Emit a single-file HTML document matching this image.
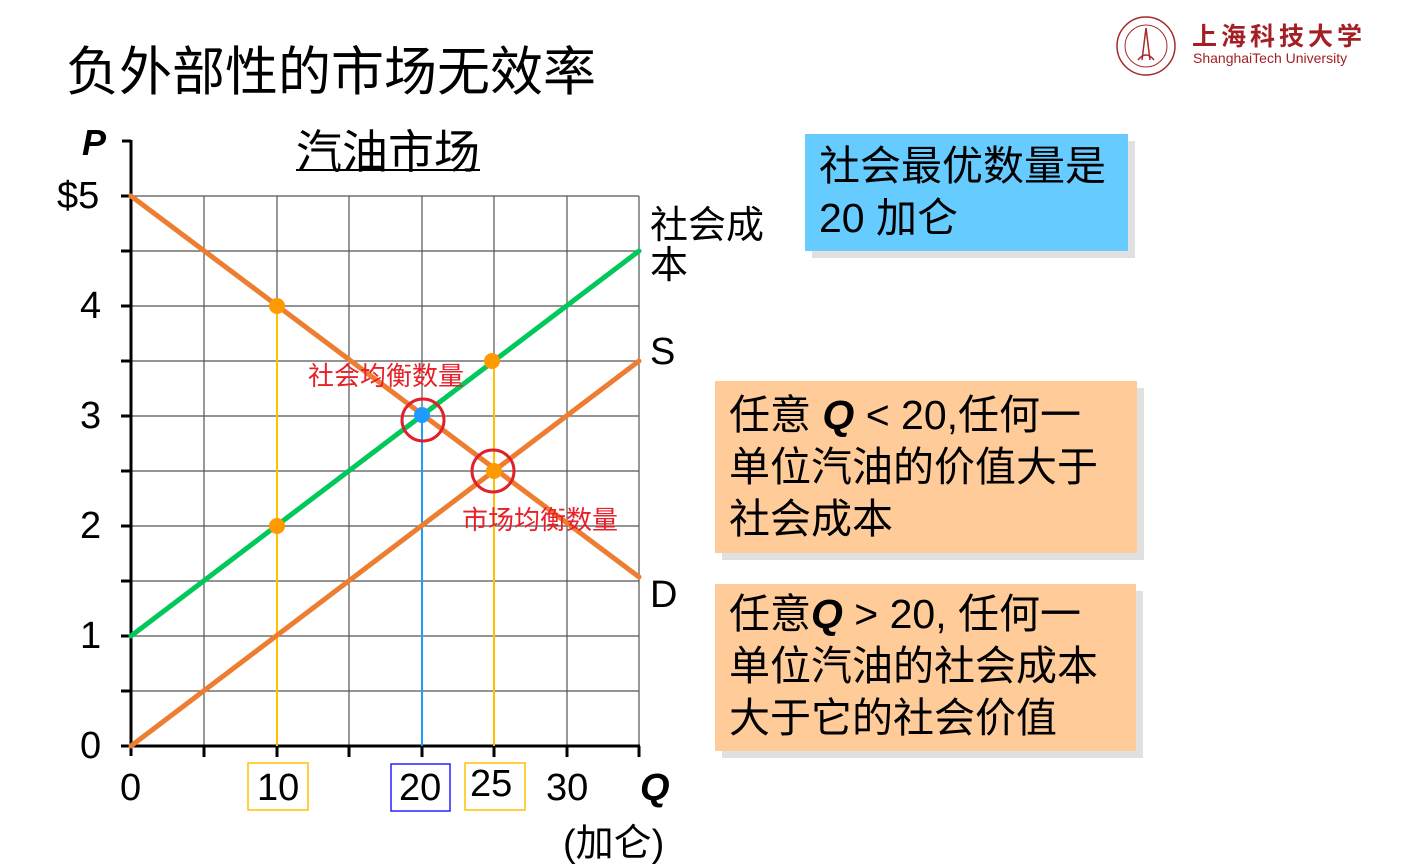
<!DOCTYPE html>
<html><head><meta charset="utf-8">
<style>
body{margin:0;width:1416px;height:868px;background:#fff;position:relative;overflow:hidden;font-family:"Liberation Sans","Noto Sans CJK SC",sans-serif;}
.a{position:absolute;white-space:nowrap;}
.box{position:absolute;box-shadow:7px 7px 0 #e0e0e0;font-size:41px;line-height:52px;color:#000;padding-left:14px;box-sizing:border-box;}
</style></head><body>
<div class="a" style="left:66px;top:41px;font-size:53px;line-height:64px;">负外部性的市场无效率</div>

<svg class="a" style="left:1112px;top:14px" width="70" height="64" viewBox="0 0 70 64">
<circle cx="34" cy="32" r="29" fill="none" stroke="#a52a2a" stroke-width="1.5"/>
<circle cx="34" cy="32" r="21" fill="none" stroke="#a52a2a" stroke-width="1"/>
<path d="M34 14 L30 46 M34 14 L38 46 M26 46 Q34 36 42 46" stroke="#a52a2a" stroke-width="1.5" fill="none"/>
</svg>
<div class="a" style="left:1192px;top:17px;font-size:25px;color:#a31f24;letter-spacing:4px;font-weight:bold;">上海科技大学</div>
<div class="a" style="left:1193px;top:50px;font-size:14px;color:#a31f24;">ShanghaiTech University</div>

<svg class="a" style="left:0;top:0" width="1416" height="868">
<g stroke="#555" stroke-width="1.2">
<line x1="204" y1="196" x2="204" y2="746"/><line x1="277" y1="196" x2="277" y2="746"/>
<line x1="349" y1="196" x2="349" y2="746"/><line x1="422" y1="196" x2="422" y2="746"/>
<line x1="494" y1="196" x2="494" y2="746"/><line x1="567" y1="196" x2="567" y2="746"/>
<line x1="639" y1="196" x2="639" y2="746"/>
<line x1="131" y1="196" x2="639" y2="196"/><line x1="131" y1="251" x2="639" y2="251"/>
<line x1="131" y1="306" x2="639" y2="306"/><line x1="131" y1="361" x2="639" y2="361"/>
<line x1="131" y1="416" x2="639" y2="416"/><line x1="131" y1="471" x2="639" y2="471"/>
<line x1="131" y1="526" x2="639" y2="526"/><line x1="131" y1="581" x2="639" y2="581"/>
<line x1="131" y1="636" x2="639" y2="636"/><line x1="131" y1="691" x2="639" y2="691"/>
</g>
<g stroke="#000" stroke-width="3">
<line x1="131" y1="140" x2="131" y2="756"/><line x1="121" y1="746" x2="640" y2="746"/>
<line x1="122" y1="141" x2="131" y2="141"/>
<line x1="121" y1="196" x2="131" y2="196"/><line x1="121" y1="251" x2="131" y2="251"/><line x1="121" y1="306" x2="131" y2="306"/><line x1="121" y1="361" x2="131" y2="361"/><line x1="121" y1="416" x2="131" y2="416"/><line x1="121" y1="471" x2="131" y2="471"/><line x1="121" y1="526" x2="131" y2="526"/><line x1="121" y1="581" x2="131" y2="581"/><line x1="121" y1="636" x2="131" y2="636"/><line x1="121" y1="691" x2="131" y2="691"/>
<line x1="204" y1="746" x2="204" y2="757"/><line x1="277" y1="746" x2="277" y2="757"/><line x1="349" y1="746" x2="349" y2="757"/><line x1="422" y1="746" x2="422" y2="757"/><line x1="494" y1="746" x2="494" y2="757"/><line x1="567" y1="746" x2="567" y2="757"/><line x1="639" y1="746" x2="639" y2="757"/>
</g>
<g stroke-width="2">
<line x1="277" y1="306" x2="277" y2="746" stroke="#ffc000"/>
<line x1="494" y1="361" x2="494" y2="746" stroke="#ffc000"/>
<line x1="422" y1="416" x2="422" y2="746" stroke="#1e9bff"/>
</g>
<g stroke-width="5" stroke-linecap="round">
<line x1="131" y1="196" x2="639" y2="577" stroke="#ed7d31"/>
<line x1="131" y1="746" x2="639" y2="361" stroke="#ed7d31"/>
<line x1="131" y1="636" x2="639" y2="251" stroke="#00c85a"/>
</g>
<circle cx="277" cy="306" r="8" fill="#ff9900"/>
<circle cx="277" cy="526" r="8" fill="#ff9900"/>
<circle cx="492" cy="361" r="8" fill="#ff9900"/>
<circle cx="494" cy="471" r="8" fill="#ff9900"/>
<circle cx="422" cy="415" r="8" fill="#1e9bff"/>
<circle cx="423" cy="420" r="21" fill="none" stroke="#e0202a" stroke-width="3"/>
<circle cx="493" cy="471" r="21" fill="none" stroke="#e0202a" stroke-width="3"/>
<rect x="248" y="763" width="60" height="47" fill="none" stroke="#ffc000" stroke-width="1.5"/>
<rect x="391" y="764" width="59" height="47" fill="none" stroke="#2222ff" stroke-width="1.5"/>
<rect x="465" y="763" width="60" height="47" fill="none" stroke="#ffc000" stroke-width="1.5"/>
</svg>

<div class="a" style="left:82px;top:122px;font-size:36px;font-weight:bold;font-style:italic;">P</div>
<div class="a" style="left:296px;top:116px;font-size:46px;text-decoration:underline;text-decoration-thickness:2px;">汽油市场</div>
<div class="a" style="left:57px;top:175px;font-size:38px;">$5</div>
<div class="a" style="left:80px;top:285px;font-size:38px;">4</div>
<div class="a" style="left:80px;top:395px;font-size:38px;">3</div>
<div class="a" style="left:80px;top:505px;font-size:38px;">2</div>
<div class="a" style="left:80px;top:615px;font-size:38px;">1</div>
<div class="a" style="left:80px;top:725px;font-size:38px;">0</div>
<div class="a" style="left:120px;top:767px;font-size:38px;">0</div>
<div class="a" style="left:257px;top:767px;font-size:38px;">10</div>
<div class="a" style="left:399px;top:767px;font-size:38px;">20</div>
<div class="a" style="left:470px;top:763px;font-size:38px;">25</div>
<div class="a" style="left:546px;top:767px;font-size:38px;">30</div>
<div class="a" style="left:640px;top:767px;font-size:38px;font-weight:bold;font-style:italic;">Q</div>
<div class="a" style="left:563px;top:812px;font-size:38px;">(加仑)</div>
<div class="a" style="left:650px;top:206px;font-size:38px;line-height:40px;">社会成<br>本</div>
<div class="a" style="left:650px;top:331px;font-size:38px;">S</div>
<div class="a" style="left:650px;top:574px;font-size:38px;">D</div>
<div class="a" style="left:308px;top:356px;font-size:26px;color:#e8202a;">社会均衡数量</div>
<div class="a" style="left:462px;top:500px;font-size:26px;color:#e8202a;">市场均衡数量</div>

<div class="box" style="left:805px;top:134px;width:323px;height:117px;background:#66ccff;padding-top:6px;line-height:52px;">社会最优数量是<br>20 加仑</div>
<div class="box" style="left:715px;top:381px;width:422px;height:172px;background:#ffcc99;padding-top:8px;">任意 <b><i>Q</i></b> &lt; 20,任何一<br>单位汽油的价值大于<br>社会成本</div>
<div class="box" style="left:715px;top:584px;width:421px;height:167px;background:#ffcc99;padding-top:4px;">任意<b><i>Q</i></b> &gt; 20, 任何一<br>单位汽油的社会成本<br>大于它的社会价值</div>
</body></html>
